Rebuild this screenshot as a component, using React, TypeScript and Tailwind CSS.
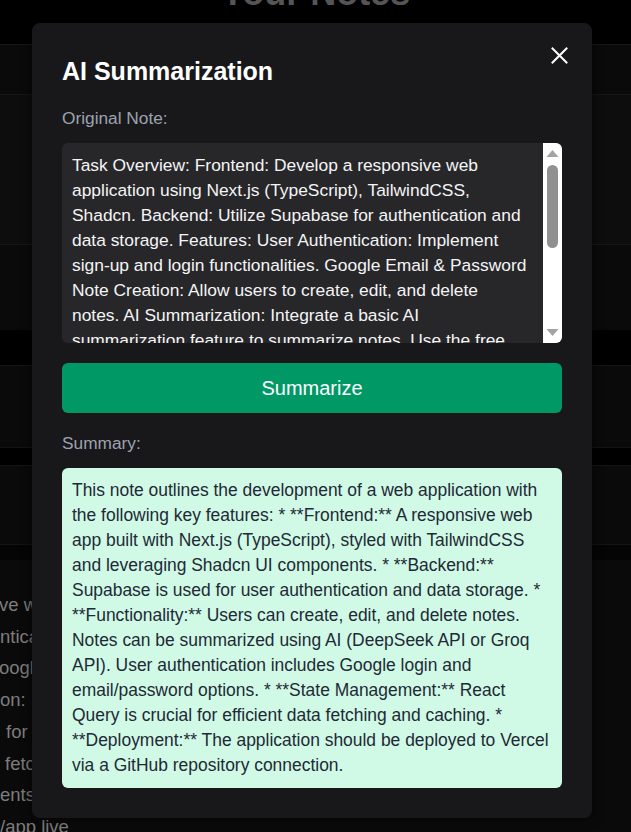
import React from "react";

const noteLines = [
  "Task Overview: Frontend: Develop a responsive web",
  "application using Next.js (TypeScript), TailwindCSS,",
  "Shadcn. Backend: Utilize Supabase for authentication and",
  "data storage. Features: User Authentication: Implement",
  "sign-up and login functionalities. Google Email & Password",
  "Note Creation: Allow users to create, edit, and delete",
  "notes. AI Summarization: Integrate a basic AI",
  "summarization feature to summarize notes. Use the free",
  "DeepSeek API or Groq API.",
];

const summaryLines = [
  "This note outlines the development of a web application with",
  "the following key features: * **Frontend:** A responsive web",
  "app built with Next.js (TypeScript), styled with TailwindCSS",
  "and leveraging Shadcn UI components. * **Backend:**",
  "Supabase is used for user authentication and data storage. *",
  "**Functionality:** Users can create, edit, and delete notes.",
  "Notes can be summarized using AI (DeepSeek API or Groq",
  "API). User authentication includes Google login and",
  "email/password options. * **State Management:** React",
  "Query is crucial for efficient data fetching and caching. *",
  "**Deployment:** The application should be deployed to Vercel",
  "via a GitHub repository connection.",
];

const bgLines: { t: string; cls: string }[] = [
  { t: "ve web application using Next.js (TypeScript)", cls: "-ml-[1px]" },
  { t: "ntication and data storage.", cls: "ml-0" },
  { t: "oogle Email & Password", cls: "-ml-[1px]" },
  { t: "on: Integrate a basic AI summarization", cls: "ml-0" },
  { t: "for efficient data fetching", cls: "ml-[6px]" },
  { t: "fetching and caching", cls: "ml-[5px]" },
  { t: "ents using Shadcn UI", cls: "ml-0" },
  { t: "/app live", cls: "ml-0" },
];

export default function App() {
  return (
    <div className="relative h-[832px] w-[631px] overflow-hidden bg-black font-['Liberation_Sans',Arial,sans-serif]">
      {/* background page */}
      <h1 className="-mt-[27px] text-center text-[36px] font-bold leading-[40px] text-[#555555]">
        Your Notes
      </h1>
      <div className="mt-[31px] flex flex-col">
        <div className="h-[51px] border-y border-[#171717] bg-[#0a0a0a]" />
        <div className="h-[150px] border-b border-[#171717] bg-[#0d0d0d]" />
        <div className="h-[85px] bg-[#0a0a0a]" />
        <div className="h-[35px] bg-black" />
        <div className="h-[83px] border-y border-[#141414] bg-[#0a0a0a]" />
        <div className="h-[17px] bg-black" />
        <div className="h-[80px] border-y border-[#141414] bg-[#0a0a0a]" />
        <div className="h-[15px] bg-[#050505]" />
        <div className="h-[272px] bg-[#0a0a0a] pt-[29px] text-[18.5px] leading-[31.7px] text-[#7d7d7d]">
          {bgLines.map((l, i) => (
            <div key={i} className={`whitespace-nowrap ${l.cls}`}>
              {l.t}
            </div>
          ))}
        </div>
      </div>

      {/* modal */}
      <div className="absolute left-[32px] top-[23px] w-[560px] rounded-lg bg-[#18181b] px-[30px] pb-[30px] pt-8 shadow-[0_0_12px_rgba(0,0,0,0.6)]">
        <button className="absolute right-[24px] top-[24px] flex h-[17px] w-[17px] items-center justify-center text-white">
          <svg width="17" height="17" viewBox="0 0 17 17" fill="none">
            <path d="M1.5 1.5L15.5 15.5M15.5 1.5L1.5 15.5" stroke="white" strokeWidth="2" strokeLinecap="square" />
          </svg>
        </button>
        <h2 className="text-[25px] font-bold leading-8 text-white">AI Summarization</h2>
        <div className="mt-[19px] text-[17.3px] leading-6 text-[#9ca3af]">Original Note:</div>
        <div className="mt-[13px] flex h-[200px] overflow-hidden rounded-md bg-[#27272a]">
          <div className="flex-1 overflow-hidden pl-2.5 pt-2.5 text-[17.4px] leading-[25px] text-[#f4f4f5]">
            {noteLines.map((l, i) => (
              <div key={i} className="whitespace-nowrap">
                {l}
              </div>
            ))}
          </div>
          <div className="flex w-[19px] flex-col items-center bg-white">
            <svg width="13" height="9" viewBox="0 0 13 9" className="mt-[6px]">
              <path d="M6.5 1L12.5 8H0.5Z" fill="#a3a3a3" />
            </svg>
            <div className="mt-[7px] h-[83px] w-[11px] rounded-full bg-[#909090]" />
            <div className="flex-1" />
            <svg width="13" height="9" viewBox="0 0 13 9" className="mb-[6px]">
              <path d="M0.5 1H12.5L6.5 8Z" fill="#a3a3a3" />
            </svg>
          </div>
        </div>
        <button className="mt-5 flex h-[50px] w-full items-center justify-center rounded-md bg-[#009966] text-xl text-white">
          Summarize
        </button>
        <div className="mt-[18px] text-[17.3px] leading-6 text-[#9ca3af]">Summary:</div>
        <div className="mt-[13px] rounded-md bg-[#d0fae5] p-2.5 text-[17.45px] leading-[25px] text-[#1f2937]">
          {summaryLines.map((l, i) => (
            <div key={i} className="whitespace-nowrap">
              {l}
            </div>
          ))}
        </div>
      </div>
    </div>
  );
}
